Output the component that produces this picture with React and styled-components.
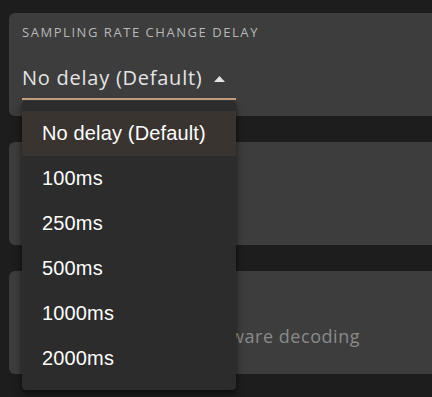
import React from "react";
import styled, { createGlobalStyle } from "styled-components";

const Global = createGlobalStyle`
  html, body { margin: 0; padding: 0; background: #1d1d1d; overflow: hidden; }
  body { font-family: "Open Sans", "Liberation Sans", sans-serif; }
  * { box-sizing: border-box; }
`;

const Page = styled.div`
  width: 432px;
  height: 397px;
  padding: 13px 0 0 9px;
  display: flex;
  flex-direction: column;
  gap: 26px;
  overflow: hidden;
`;

const Card = styled.div`
  position: relative;
  width: 440px;
  height: 103px;
  flex: none;
  background: #3d3d3d;
  border-radius: 6px;
  padding: ${(p) => p.$pad || "11px 13px 0"};
  display: flex;
  flex-direction: column;
`;

const Label = styled.div`
  font-size: 13px;
  line-height: 16px;
  letter-spacing: 1.55px;
  color: #b8b8b8;
  text-transform: uppercase;
  white-space: nowrap;
`;

const Select = styled.div`
  margin-top: 26px;
  width: 214px;
  display: flex;
  align-items: center;
  gap: 12px;
  padding-bottom: 8px;
  border-bottom: 2px solid #c9a07c;
  color: #e4e4e4;
  font-size: 20px;
  line-height: 24px;
  letter-spacing: 0.75px;
  white-space: nowrap;
`;

const Arrow = styled.svg`
  width: 11px;
  height: 6px;
  flex: none;
  margin-top: 1px;
`;

const Menu = styled.ul`
  position: absolute;
  left: 13px;
  top: 88px;
  width: 214px;
  margin: 0;
  padding: 10px 0 9px;
  list-style: none;
  background: #2c2c2c;
  border-radius: 4px;
  box-shadow: 0 5px 10px rgba(0, 0, 0, 0.35), 0 2px 4px rgba(0, 0, 0, 0.3);
  z-index: 10;
`;

const Item = styled.li`
  height: 45px;
  display: flex;
  align-items: center;
  padding-left: 20px;
  font-family: "Liberation Sans", Arial, sans-serif;
  font-size: 20px;
  letter-spacing: 0.15px;
  color: #ffffff;
  background: ${(p) => (p.$active ? "#3a3431" : "transparent")};
`;

const Desc = styled.div`
  font-size: 18px;
  line-height: 24px;
  letter-spacing: 0.55px;
  color: #8a8a8a;
  white-space: nowrap;
`;

const options = ["No delay (Default)", "100ms", "250ms", "500ms", "1000ms", "2000ms"];

export default function App() {
  return (
    <>
      <Global />
      <Page>
        <Card>
          <Label>Sampling rate change delay</Label>
          <Select>
            <span>No delay (Default)</span>
            <Arrow viewBox="0 0 11 6">
              <polygon points="0,6 5.5,0 11,6" fill="#e4e4e4" />
            </Arrow>
          </Select>
          <Menu>
            {options.map((o, i) => (
              <Item key={o} $active={i === 0}>
                {o}
              </Item>
            ))}
          </Menu>
        </Card>
        <Card />
        <Card $pad="53px 13px 0">
          <Desc>Use software over hardware decoding</Desc>
        </Card>
      </Page>
    </>
  );
}
